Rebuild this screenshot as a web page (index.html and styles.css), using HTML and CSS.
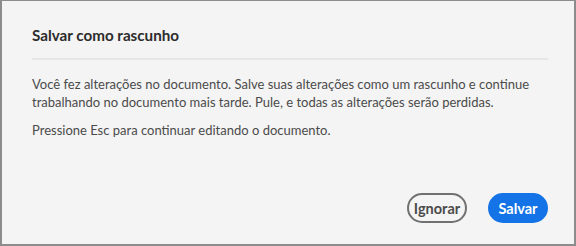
FILE: index.html
```html
<!DOCTYPE html>
<html lang="pt-BR">
<head>
<meta charset="utf-8">
<link rel="stylesheet" href="styles.css">
</head>
<body>
<div class="dialog">
  <h1 class="title">Salvar como rascunho</h1>
  <hr class="divider">
  <div class="content">
    <p class="para">Você fez alterações no documento. Salve suas alterações como um rascunho e continue trabalhando no documento mais tarde. Pule, e todas as alterações serão perdidas.</p>
    <p class="para">Pressione Esc para continuar editando o documento.</p>
  </div>
  <div class="footer">
    <button class="btn btn-secondary">Ignorar</button>
    <button class="btn btn-primary">Salvar</button>
  </div>
</div>
</body>
</html>
```
FILE: styles.css
```css
html, body {
  margin: 0;
  padding: 0;
  background: #f4f4f4;
}
.dialog {
  box-sizing: border-box;
  width: 576px;
  height: 246px;
  border: 2px solid #8c8c8c;
  border-top-width: 1px;
  background: #f4f4f4;
  padding: 24px 26px 21px 30px;
  display: flex;
  flex-direction: column;
  font-family: Lato, "Open Sans", sans-serif;
}
.title {
  margin: 0;
  font-size: 15.2px;
  line-height: 20px;
  font-weight: 700;
  color: #2c2c2c;
}
.divider {
  margin: 13px 0 0 0;
  border: 0;
  height: 2px;
  background: #e6e6e6;
}
.content {
  margin-top: 15px;
}
.para {
  margin: 0 0 10px 0;
  font-size: 13px;
  line-height: 18px;
  color: #4b4b4b;
}
.footer {
  margin-top: auto;
  display: flex;
  justify-content: flex-end;
  gap: 21px;
}
.btn {
  box-sizing: border-box;
  height: 30px;
  width: 60px;
  border-radius: 15px;
  font-family: Lato, "Open Sans", sans-serif;
  font-size: 14.5px;
  font-weight: 700;
  padding: 0;
  text-align: center;
  cursor: pointer;
}
.btn-secondary {
  background: transparent;
  border: 2px solid #707070;
  color: #4b4b4b;
}
.btn-primary {
  background: #1473e6;
  border: 2px solid #1473e6;
  color: #ffffff;
}
```
